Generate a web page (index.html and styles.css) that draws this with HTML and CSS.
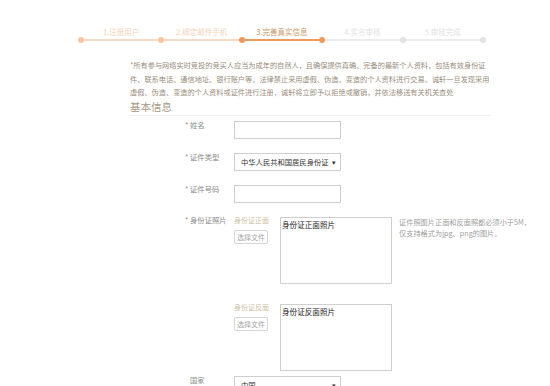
FILE: index.html
```html
<!DOCTYPE html>
<html lang="zh-CN">
<head>
    <meta charset="UTF-8">
    <meta name="viewport" content="width=device-width, initial-scale=1.0">
    <title>完善真实信息</title>
    <link rel="stylesheet" href="styles.css">
</head>
<body>
    <div class="steps">
        <div class="step done">1.注册用户</div>
        <div class="step done">2.绑定邮件手机</div>
        <div class="step current">3.完善真实信息</div>
        <div class="step">4.实名审核</div>
        <div class="step last">5.审核完成</div>
    </div>

    <div class="content">
        <p class="notice">*所有参与网络实时竞投的竞买人应当为成年的自然人，且确保提供真确、完备的最新个人资料，包括有效身份证件、联系电话、通信地址、银行账户等。法律禁止采用虚假、伪造、变造的个人资料进行交易。诚轩一旦发现采用虚假、伪造、变造的个人资料或证件进行注册，诚轩将立即予以拒绝或撤销，并依法移送有关机关查处</p>
        <h2 class="section-title">基本信息</h2>

        <form class="form">
            <div class="row">
                <label class="label">* 姓名</label>
                <input type="text" class="field">
            </div>
            <div class="row">
                <label class="label">* 证件类型</label>
                <div class="select-wrap">
                    <select class="field select">
                        <option>中华人民共和国居民身份证</option>
                    </select>
                </div>
            </div>
            <div class="row">
                <label class="label">* 证件号码</label>
                <input type="text" class="field">
            </div>
            <div class="row photo-row">
                <label class="label">* 身份证照片</label>
                <div class="upload">
                    <span class="upload-title">身份证正面</span>
                    <button type="button" class="file-btn">选择文件</button>
                </div>
                <textarea class="preview">身份证正面照片</textarea>
                <p class="hint">证件照图片正面和反面照都必须小于5M，仅支持格式为jpg、png的图片。</p>
            </div>
            <div class="row photo-row second">
                <span class="label"></span>
                <div class="upload">
                    <span class="upload-title">身份证反面</span>
                    <button type="button" class="file-btn">选择文件</button>
                </div>
                <textarea class="preview">身份证反面照片</textarea>
            </div>
            <div class="row">
                <label class="label plain">国家</label>
                <div class="select-wrap">
                    <select class="field select">
                        <option>中国</option>
                    </select>
                </div>
            </div>
        </form>
    </div>
</body>
</html>
```

FILE: styles.css
```css
body {
    margin: 0;
    background: #ffffff;
    font-family: "Noto Sans CJK SC", "Noto Sans", sans-serif;
    color: #999;
}
.steps {
    display: flex;
    margin: 0 0 0 81px;
    padding-top: 27px;
}
.step {
    position: relative;
    width: 80.4px;
    height: 12px;
    font-size: 7.5px;
    line-height: 10px;
    text-align: center;
    color: #e2e2e2;
    border-bottom: 2px solid #ececec;
}
.step::before,
.step.last::after {
    content: "";
    position: absolute;
    left: -3px;
    bottom: -4px;
    width: 6px;
    height: 6px;
    border-radius: 50%;
    background: #e2e2e2;
}
.step.last::after {
    left: auto;
    right: -3px;
}
.step.done {
    color: #f3d2b6;
    border-bottom-color: #f6dcc8;
}
.step.done::before {
    background: #f4c8a4;
}
.step.current {
    color: #cf9a6c;
    border-bottom-color: #ec9a60;
}
.step.current::before,
.step.current + .step::before {
    background: #ef9a5d;
}
.content {
    width: 361px;
    margin: 18px 0 0 130px;
}
.notice {
    margin: 0;
    font-size: 7.2px;
    line-height: 13.5px;
    color: #9a8d7c;
}
.section-title {
    margin: 0;
    padding: 0 0 1px;
    font-size: 10.5px;
    font-weight: normal;
    line-height: 14px;
    color: #a99a88;
    border-bottom: 1px solid #eeeeee;
}
.form {
    padding: 5px 0 0 55px;
}
.row {
    display: flex;
    align-items: flex-start;
    margin-bottom: 14px;
}
.label {
    width: 49px;
    flex-shrink: 0;
    margin-top: -1px;
    font-size: 7.3px;
    line-height: 10px;
    color: #8a8a8a;
}
.label.plain {
    padding-left: 5px;
    width: 44px;
    margin-top: -1px;
}
.field {
    box-sizing: border-box;
    display: block;
    width: 107px;
    height: 18px;
    margin: 0;
    border: 1px solid #cfcfcf;
    background: #fff;
    font-family: inherit;
}
.select-wrap {
    position: relative;
}
.select-wrap::after {
    content: "▾";
    position: absolute;
    right: 5px;
    top: 4px;
    font-size: 7px;
    line-height: 10px;
    color: #333;
    pointer-events: none;
}
.select {
    -webkit-appearance: none;
    appearance: none;
    padding: 0 0 0 6px;
    font-size: 7.3px;
    line-height: 16px;
    color: #333;
    border-radius: 0;
}
.photo-row {
    margin-bottom: 20px;
}
.photo-row .label {
    margin-top: -2px;
}
.photo-row.second {
    margin-bottom: 5px;
}
.upload {
    display: flex;
    flex-direction: column;
    align-items: flex-start;
    width: 46px;
    flex-shrink: 0;
    margin-top: -2px;
}
.upload-title {
    font-size: 7px;
    line-height: 10px;
    color: #cdc2a4;
}
.file-btn {
    margin-top: 5px;
    padding: 0;
    width: 34px;
    height: 14px;
    font-family: inherit;
    font-size: 7px;
    color: #a5a5a5;
    background: #fff;
    border: 1px solid #d6d6d6;
    border-radius: 2px;
}
.preview {
    box-sizing: border-box;
    flex-shrink: 0;
    width: 112px;
    height: 67px;
    margin: 0;
    padding: 1px 1px;
    resize: none;
    border: 1px solid #cfcfcf;
    font-family: inherit;
    font-size: 7.6px;
    line-height: 11px;
    color: #222;
}
.hint {
    margin: 0 0 0 7px;
    width: 138px;
    flex-shrink: 0;
    font-size: 7.2px;
    line-height: 11px;
    color: #a0a0a0;
}
```
